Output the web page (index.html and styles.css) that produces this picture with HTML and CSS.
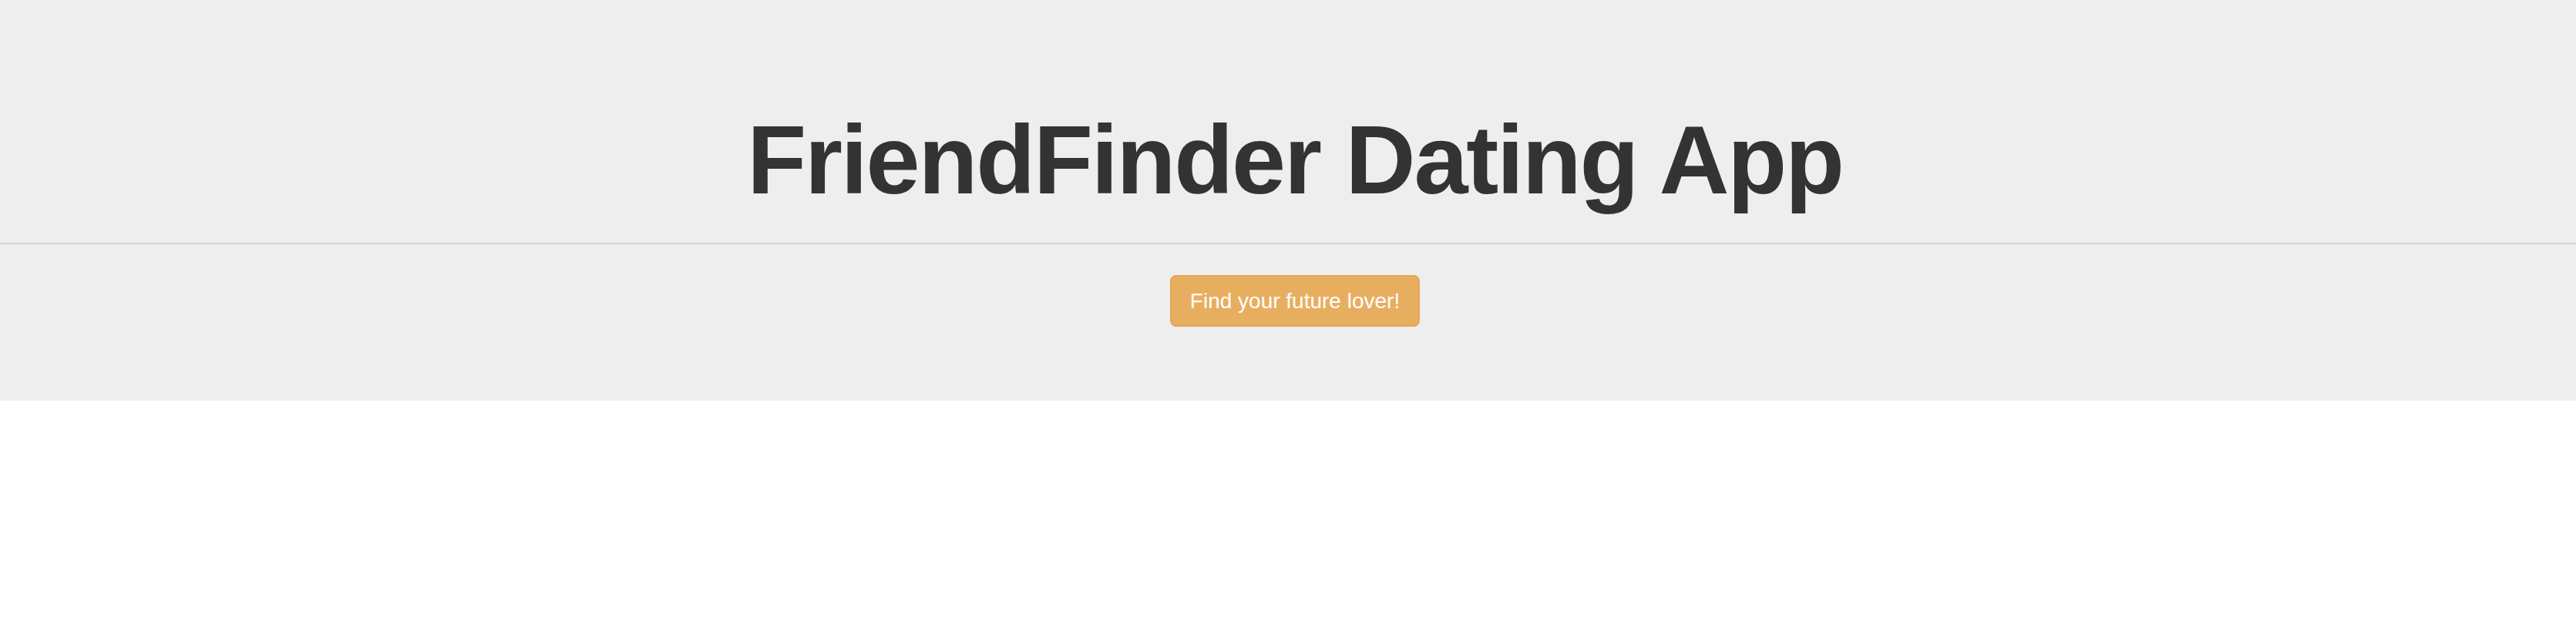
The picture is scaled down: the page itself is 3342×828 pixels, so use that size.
FILE: index.html
```html
<!DOCTYPE html>
<html>
<head>
<meta charset="utf-8">
<title>FriendFinder</title>
<link rel="stylesheet" href="styles.css">
</head>
<body>
<div class="jumbotron">
  <div class="container">
    <h1 class="title">FriendFinder Dating App</h1>
  </div>
  <hr class="rule">
  <div class="container">
    <a class="btn-warning" href="#">Find your future lover!</a>
  </div>
</div>
</body>
</html>
```

FILE: styles.css
```css
html, body {
  margin: 0;
  padding: 0;
  background: #fff;
}
body {
  font-family: "Liberation Sans", Arial, Helvetica, sans-serif;
  color: #333;
}
.jumbotron {
  background: #eeeeee;
  padding: 96px 0;
  text-align: center;
}
.container {
  padding-left: 18px;
}
.title {
  margin: 43px 0 17px;
  font-size: 126px;
  line-height: 1.1;
  font-weight: 700;
  letter-spacing: -2.2px;
  color: #333333;
}
.rule {
  margin: 37px 0 40px;
  border: 0;
  border-top: 2px solid #d4d4d4;
  height: 0;
}
.btn-warning {
  display: inline-block;
  box-sizing: border-box;
  height: 67px;
  padding: 0 24px;
  line-height: 63px;
  font-size: 28px;
  color: #ffffff;
  text-decoration: none;
  background: #e8ae60;
  border: 2px solid #e4a654;
  border-radius: 8px;
  vertical-align: top;
}
```
